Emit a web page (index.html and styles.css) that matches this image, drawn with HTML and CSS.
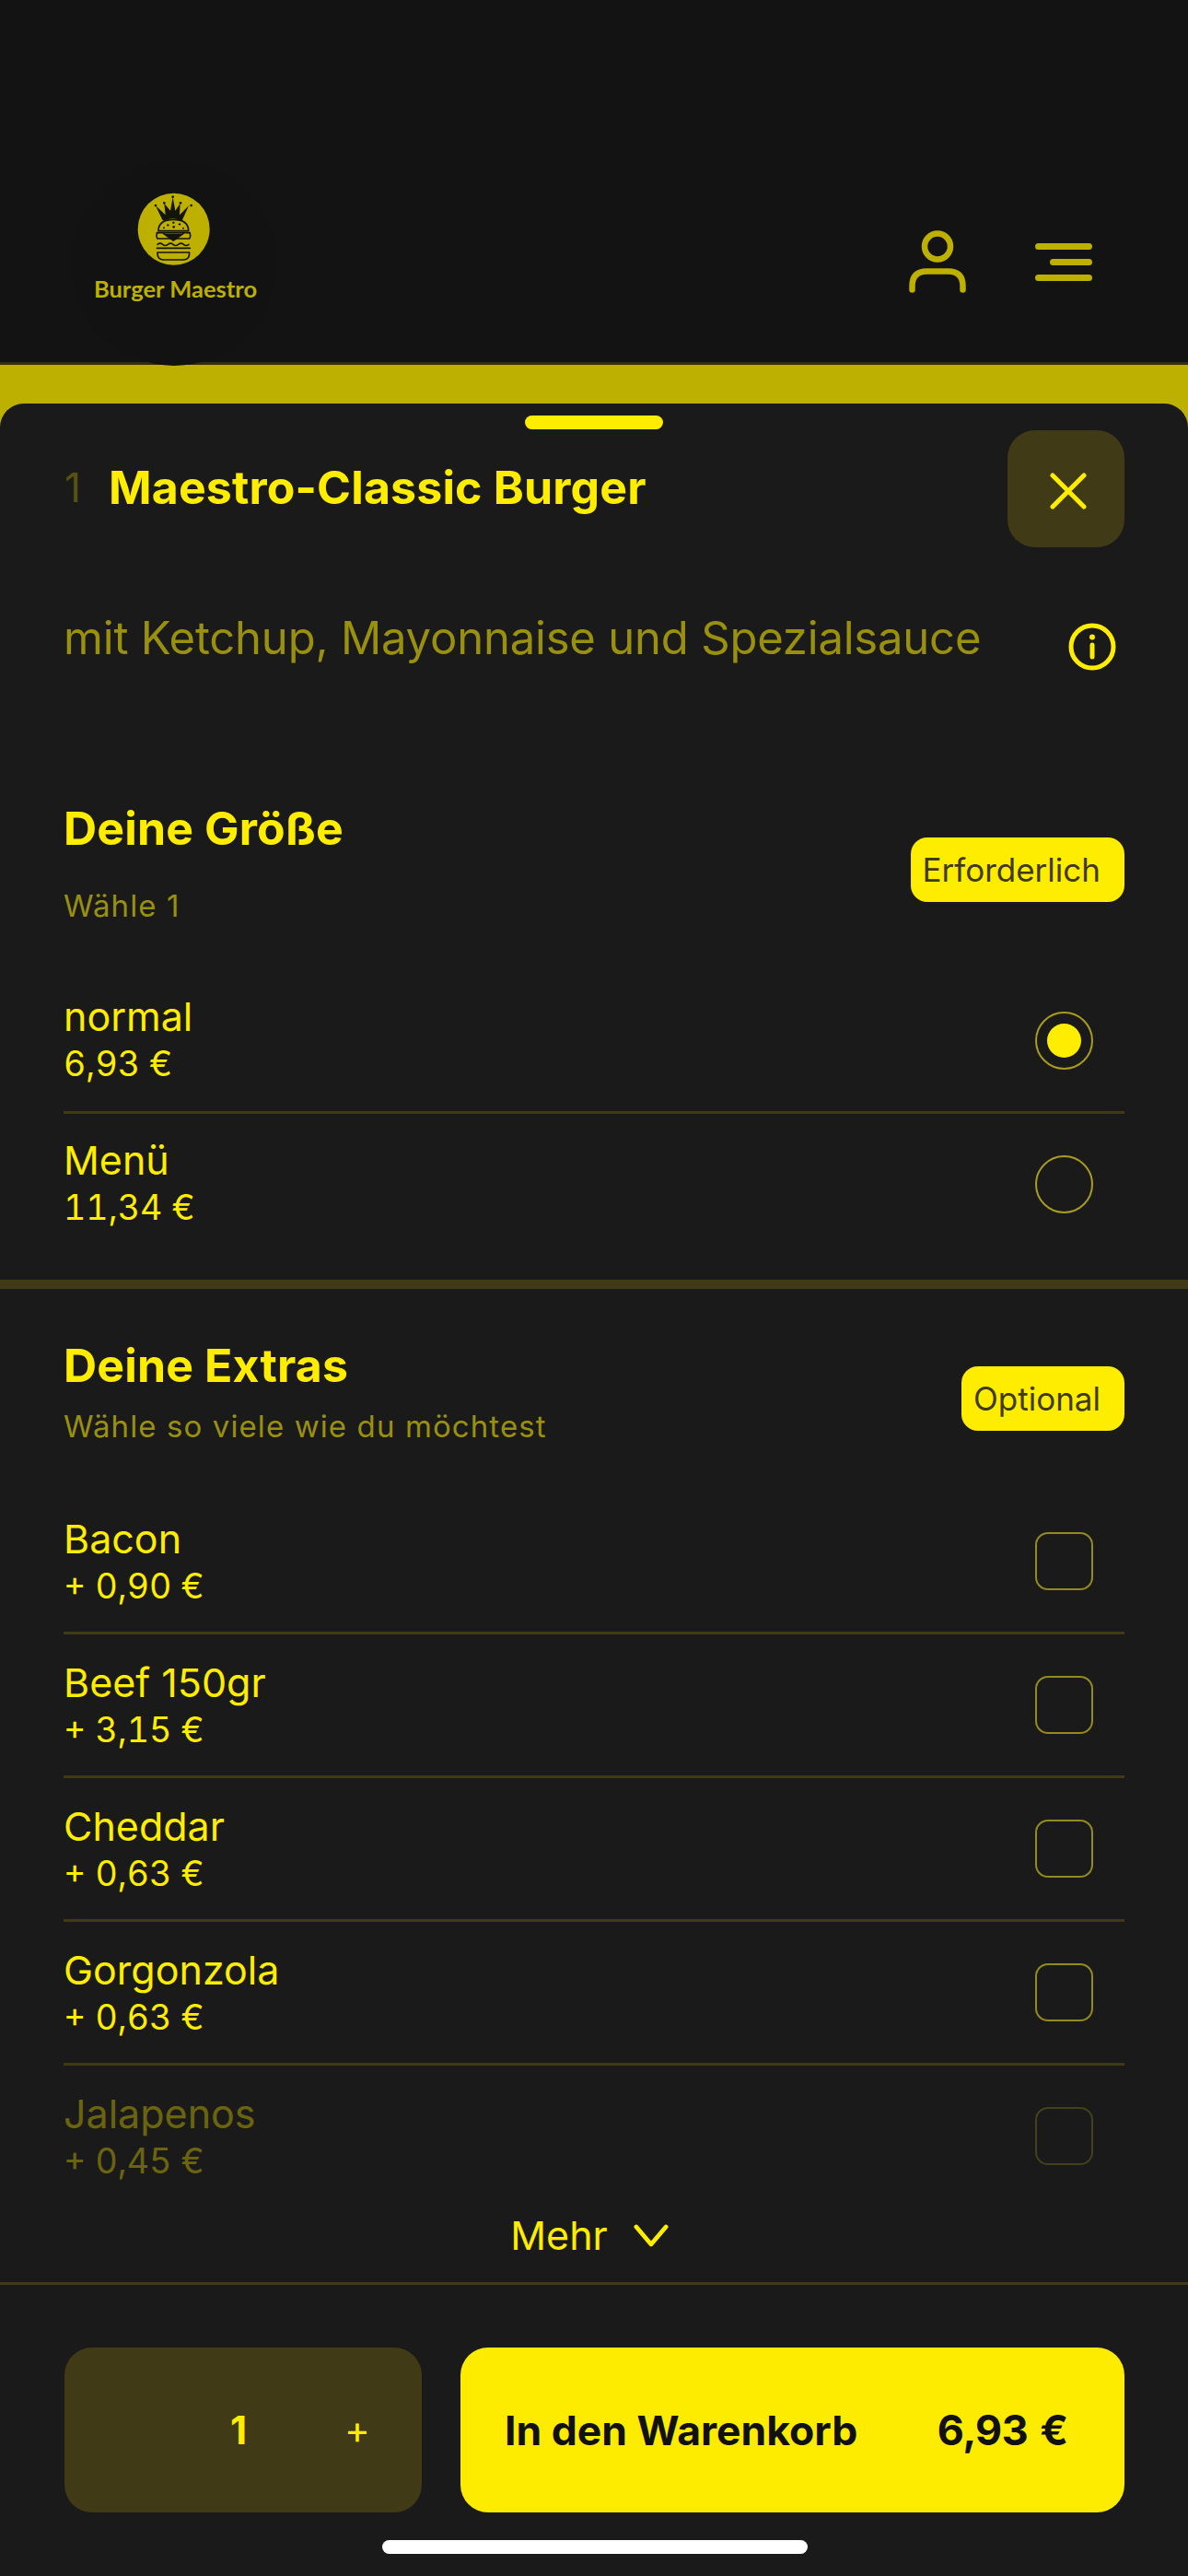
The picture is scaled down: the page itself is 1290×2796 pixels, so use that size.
FILE: index.html
```html
<!DOCTYPE html>
<html lang="de">
<head>
    <meta charset="UTF-8">
    <title>Burger Maestro</title>
    <link rel="stylesheet" href="styles.css">
</head>
<body>
<div class="page">
    <header class="top">
        <span class="logo-halo"></span>
        <div class="logo">
            <svg class="logo-mark" viewBox="0 0 264 264" width="88" height="88">
                <circle cx="131" cy="131" r="117" fill="#bdb000"/>
                <g fill="#14140a">
                    <path d="M72 55l32 30 -4-38 20 24 8-44 8 44 16-24 -2 38 30-30 -20 44q-2 8-10 3q-22-10-46 0q-8 4-11-3z"/>
                    <circle cx="72" cy="54" r="4"/><circle cx="100" cy="46" r="4"/><circle cx="128" cy="26" r="4"/><circle cx="153" cy="46" r="4"/><circle cx="188" cy="54" r="4"/>
                </g>
                <g fill="none" stroke="#14140a" stroke-width="5" stroke-linejoin="round" stroke-linecap="round">
                    <path d="M81 137q0-37 49-37t49 37z" fill="#bdb000"/>
                    <path d="M76 143h108M78 143q-6 9 0 19h104q6-10 0-19"/>
                    <path d="M98 146l32 22 32-22" fill="#14140a"/>
                    <path d="M78 181q9-7 17 0t17 0t17 0t17 0t17 0t17 0"/>
                    <path d="M76 193h108"/>
                    <path d="M78 207h104q1 24-20 24h-64q-21 0-20-24z"/>
                </g>
                <g fill="#14140a">
                    <circle cx="112" cy="118" r="3.500"/><circle cx="130" cy="110" r="3.500"/><circle cx="150" cy="115" r="3.500"/><circle cx="131" cy="124" r="4"/><circle cx="99" cy="127" r="3"/><circle cx="162" cy="128" r="3"/>
                </g>
            </svg>
            <span class="logo-name">Burger Maestro</span>
        </div>
        <div class="top-icons">
            <svg class="icon-user" viewBox="0 0 62 68" width="62" height="68">
                <circle cx="31" cy="17.500" r="14" fill="none" stroke="#bdb000" stroke-width="6.500"/>
                <path d="M3.500 64.500v-4q0-16 16-16h23q16 0 16 16v4" fill="none" stroke="#bdb000" stroke-width="6.500" stroke-linecap="round"/>
            </svg>
            <svg class="icon-menu" viewBox="0 0 62 42" width="62" height="42">
                <path d="M3.500 3.500h55M19.500 20.500h39M3.500 37.500h55" fill="none" stroke="#bdb000" stroke-width="7" stroke-linecap="round"/>
            </svg>
        </div>
    </header>

    <main class="sheet">
        <span class="handle"></span>

        <div class="sheet-head">
            <span class="count">1</span>
            <h1 class="title">Maestro-Classic Burger</h1>
            <button class="close">
                <svg viewBox="0 0 40 40" width="40" height="40">
                    <path d="M3 3l34 34M37 3l-34 34" stroke="#ffed00" stroke-width="5" stroke-linecap="round"/>
                </svg>
            </button>
        </div>

        <div class="desc">
            <p class="desc-text">mit Ketchup, Mayonnaise und Spezialsauce</p>
            <svg class="icon-info" viewBox="0 0 52 52" width="52" height="52">
                <circle cx="26" cy="26" r="23" fill="none" stroke="#ffed00" stroke-width="5"/>
                <circle cx="26" cy="15.500" r="3" fill="#ffed00"/>
                <path d="M26 24v13" stroke="#ffed00" stroke-width="5" stroke-linecap="round"/>
            </svg>
        </div>

        <section class="group group-size">
            <div class="group-head">
                <div>
                    <h2 class="group-title">Deine Größe</h2>
                    <p class="group-sub">Wähle 1</p>
                </div>
                <span class="badge">Erforderlich</span>
            </div>
            <div class="row">
                <div class="row-text"><div class="row-name">normal</div><div class="row-price">6,93 €</div></div>
                <span class="radio on"></span>
            </div>
            <div class="row last">
                <div class="row-text"><div class="row-name">Menü</div><div class="row-price">11,34 €</div></div>
                <span class="radio"></span>
            </div>
        </section>

        <section class="group group-extras">
            <div class="group-head">
                <div>
                    <h2 class="group-title">Deine Extras</h2>
                    <p class="group-sub">Wähle so viele wie du möchtest</p>
                </div>
                <span class="badge">Optional</span>
            </div>
            <div class="row">
                <div class="row-text"><div class="row-name">Bacon</div><div class="row-price">+ 0,90 €</div></div>
                <span class="check"></span>
            </div>
            <div class="row">
                <div class="row-text"><div class="row-name">Beef 150gr</div><div class="row-price">+ 3,15 €</div></div>
                <span class="check"></span>
            </div>
            <div class="row">
                <div class="row-text"><div class="row-name">Cheddar</div><div class="row-price">+ 0,63 €</div></div>
                <span class="check"></span>
            </div>
            <div class="row">
                <div class="row-text"><div class="row-name">Gorgonzola</div><div class="row-price">+ 0,63 €</div></div>
                <span class="check"></span>
            </div>
            <div class="row last faded">
                <div class="row-text"><div class="row-name">Jalapenos</div><div class="row-price">+ 0,45 €</div></div>
                <span class="check"></span>
            </div>
        </section>

        <div class="more">
            <span>Mehr</span>
            <svg viewBox="0 0 40 26" width="38" height="25">
                <path d="M3 3l17 20 17-20" fill="none" stroke="#ffed00" stroke-width="5" stroke-linecap="round" stroke-linejoin="round"/>
            </svg>
        </div>

        <footer class="bottom">
            <div class="actions">
                <div class="qty">
                    <span class="qty-num">1</span>
                    <span class="qty-plus">+</span>
                </div>
                <button class="cart">
                    <span class="cart-label">In den Warenkorb</span>
                    <span class="cart-total">6,93 €</span>
                </button>
            </div>
            <span class="home-bar"></span>
        </footer>
    </main>
</div>
</body>
</html>
```

FILE: styles.css
```css
*{
    box-sizing: border-box;
}
html,body{
    margin: 0;
    padding: 0;
}
body{
    font-family: "Inter", "Liberation Sans", sans-serif;
    color: #ffed00;
}
h1,h2,p{
    margin: 0;
}
.page{
    position: relative;
    width: 1290px;
    height: 2796px;
    overflow: hidden;
    background: #bdb000;
    display: flex;
    flex-direction: column;
}

/* header */
.top{
    position: relative;
    height: 396px;
    padding: 205px 104px 0 101px;
    display: flex;
    justify-content: space-between;
    background: #131313;
    border-bottom: 3px solid #322f10;
}
.logo-halo{
    position: absolute;
    left: 78px;
    top: 175px;
    width: 222px;
    height: 222px;
    border-radius: 50%;
    background: #121212;
}
.logo{
    position: relative;
    width: 176px;
    display: flex;
    flex-direction: column;
    align-items: center;
}
.logo-name{
    margin: 4px 0 0 3px;
    font-family: "Lato", sans-serif;
    font-size: 25.500px;
    font-weight: 700;
    line-height: 32px;
    white-space: nowrap;
    color: #bdb000;
}
.top-icons{
    display: flex;
    align-items: flex-start;
    gap: 75px;
    margin-top: 45px;
}
.icon-menu{
    margin-top: 14px;
}

/* sheet */
.sheet{
    position: relative;
    flex: 1;
    margin-top: 42px;
    background: #1a1a1a;
    border-radius: 26px 26px 0 0;
    display: flex;
    flex-direction: column;
    min-height: 0;
}
.handle{
    position: absolute;
    left: 570px;
    top: 13px;
    width: 150px;
    height: 15px;
    border-radius: 8px;
    background: #ffed00;
}
.sheet-head{
    display: flex;
    align-items: center;
    padding: 29px 69px 0 70px;
}
.count{
    width: 48px;
    margin-bottom: 3px;
    font-size: 44px;
    color: #575214;
}
.title{
    flex: 1;
    margin-bottom: 3px;
    font-size: 50px;
    font-weight: 700;
    letter-spacing: 0.15px;
}
.close{
    width: 127px;
    height: 127px;
    border: 0;
    padding: 4px 0 0 4px;
    border-radius: 30px;
    background: #403a16;
    display: flex;
    align-items: center;
    justify-content: center;
}
.desc{
    display: flex;
    justify-content: space-between;
    padding: 67px 78px 0 69px;
}
.desc-text{
    font-size: 49px;
    line-height: 64px;
    letter-spacing: -0.2px;
    color: #9a9010;
}
.icon-info{
    margin-top: 15px;
}

/* groups */
.group{
    padding: 0 69px;
}
.group-size{
    height: 671px;
    padding-top: 142px;
    border-bottom: 10px solid #403a16;
}
.group-extras{
    flex: 1;
    min-height: 0;
    padding-top: 54px;
    overflow: hidden;
}
.group-head{
    display: flex;
    align-items: center;
    justify-content: space-between;
    margin-bottom: 48px;
}
.group-title{
    font-size: 50px;
    font-weight: 700;
    line-height: 58px;
    letter-spacing: 0.15px;
}
.group-sub{
    font-size: 33px;
    line-height: 44px;
    letter-spacing: 1.1px;
    color: #9a9010;
}
.group-size .group-sub{
    margin-top: 33px;
}
.group-extras .group-sub{
    margin-top: 15px;
}
.badge{
    height: 70px;
    margin-top: 12px;
    padding: 0 26px 0 13px;
    border-radius: 18px;
    background: #ffed00;
    color: #403a16;
    font-size: 35px;
    line-height: 70px;
}
.row{
    height: 156px;
    display: flex;
    align-items: center;
    justify-content: space-between;
    padding-right: 34px;
    border-bottom: 3px solid #403a16;
}
.row.last{
    border-bottom: 0;
    padding-bottom: 3px;
}
.row.faded{
    opacity: 0.35;
}
.row-text{
    margin-bottom: 4px;
}
.group-extras .row-text{
    margin-bottom: 0;
}
.row-name{
    margin-bottom: 3px;
    font-size: 43px;
    line-height: 52px;
}
.row-price{
    font-size: 37.500px;
    line-height: 46px;
    font-variant-numeric: tabular-nums;
}
.radio{
    position: relative;
    width: 63px;
    height: 63px;
    border: 2px solid #a79c20;
    border-radius: 50%;
}
.radio.on:after{
    content: "";
    position: absolute;
    left: 11px;
    top: 11px;
    width: 37px;
    height: 37px;
    border-radius: 50%;
    background: #ffed00;
}
.check{
    width: 63px;
    height: 63px;
    border: 2px solid #938a20;
    border-radius: 14px;
}

/* more + footer */
.more{
    height: 102px;
    padding-right: 10px;
    display: flex;
    align-items: center;
    justify-content: center;
    gap: 28px;
    font-size: 43px;
}
.bottom{
    height: 319px;
    border-top: 3px solid #403a16;
    padding: 68px 69px 0 70px;
    display: flex;
    flex-direction: column;
    align-items: center;
}
.actions{
    width: 100%;
    display: flex;
    gap: 42px;
}
.qty{
    width: 388px;
    height: 179px;
    padding-left: 180px;
    border-radius: 30px;
    background: #403a16;
    display: flex;
    align-items: center;
    font-size: 42px;
}
.qty-num{
    font-weight: 700;
    width: 124px;
}
.qty-plus{
    font-size: 42px;
    margin-bottom: 2px;
}
.cart{
    flex: 1;
    height: 179px;
    border: 0;
    padding: 0 61px 0 48px;
    border-radius: 30px;
    background: #fdec00;
    color: #111111;
    font-family: inherit;
    font-weight: 700;
    display: flex;
    align-items: center;
    justify-content: space-between;
}
.cart-label{
    font-size: 44.500px;
}
.cart-total{
    font-size: 45px;
    font-variant-numeric: tabular-nums;
}
.home-bar{
    width: 462px;
    height: 15px;
    margin-top: 30px;
    border-radius: 8px;
    background: #ffffff;
}
```
